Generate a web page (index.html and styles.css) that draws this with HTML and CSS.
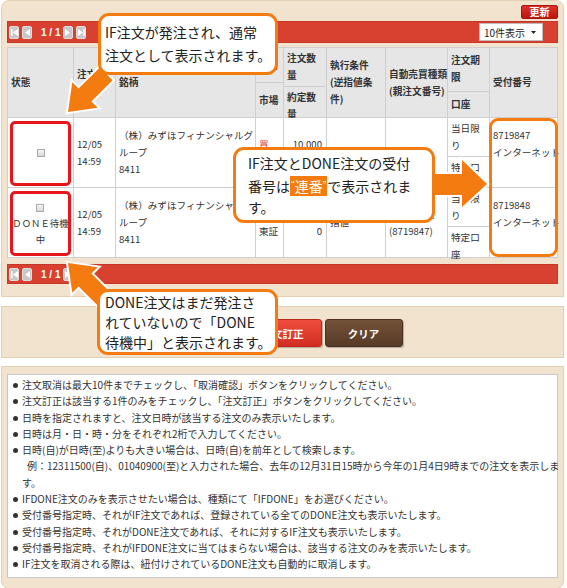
FILE: index.html
```html
<!DOCTYPE html>
<html lang="ja">
<head>
<meta charset="utf-8">
<title>注文一覧</title>
<link rel="stylesheet" href="styles.css">
</head>
<body>
<div class="page">
  <section class="panel panel-top">
    <div class="refresh-row"><span class="btn-refresh">更新</span></div>
    <div class="bar">
      <div class="pager">
        <span class="pg"><svg width="7" height="7" viewBox="0 0 7 7"><rect x="0" y="0" width="1.5" height="7" fill="#fff"/><path d="M7 0 L2 3.5 L7 7Z" fill="#fff"/></svg></span>
        <span class="pg"><svg width="6" height="7" viewBox="0 0 6 7"><path d="M6 0 L1 3.5 L6 7Z" fill="#fff"/></svg></span>
        <span class="pg-num">1 / 1</span>
        <span class="pg"><svg width="6" height="7" viewBox="0 0 6 7"><path d="M0 0 L5 3.5 L0 7Z" fill="#fff"/></svg></span>
        <span class="pg"><svg width="7" height="7" viewBox="0 0 7 7"><path d="M0 0 L5 3.5 L0 7Z" fill="#fff"/><rect x="5.5" y="0" width="1.5" height="7" fill="#fff"/></svg></span>
      </div>
      <div class="select"><span>10件表示</span><svg width="5" height="3" viewBox="0 0 5 3"><path d="M0 0 L5 0 L2.5 3Z" fill="#222"/></svg></div>
    </div>

    <div class="grid">
      <div class="th">状態</div>
      <div class="th">注文<br>日時</div>
      <div class="th">銘柄</div>
      <div class="th split"><div class="sub">取引</div><div class="sub">市場</div></div>
      <div class="th split"><div class="sub">注文数<br>量</div><div class="sub">約定数<br>量</div></div>
      <div class="th">執行条件<br>(逆指値条<br>件)</div>
      <div class="th">自動売買種類<br>(親注文番号)</div>
      <div class="th split"><div class="sub">注文期<br>限</div><div class="sub">口座</div></div>
      <div class="th">受付番号</div>

      <div class="td status"><div><span class="cb"></span></div><span class="frame-red"></span></div>
      <div class="td"><div>12/05<br>14:59</div></div>
      <div class="td"><div>（株）みずほフィナンシャルグ<br>ループ<br>8411</div></div>
      <div class="td"><div><span class="buy">買</span><br>東証</div></div>
      <div class="td num"><div>10,000<br>0</div></div>
      <div class="td"><div>指値</div></div>
      <div class="td"><div>IF注文</div></div>
      <div class="td split"><div class="sub">当日限<br>り</div><div class="sub">特定口<br>座</div></div>
      <div class="td"><div>8719847<br>インターネット<br>&nbsp;</div></div>

      <div class="td status"><div class="done"><span class="cb"></span><br>ＤＯＮＥ待機<br>中</div><span class="frame-red"></span></div>
      <div class="td"><div>12/05<br>14:59</div></div>
      <div class="td"><div>（株）みずほフィナンシャルグ<br>ループ<br>8411</div></div>
      <div class="td"><div><span class="buy">売</span><br>東証</div></div>
      <div class="td num"><div>10,000<br>0</div></div>
      <div class="td"><div>指値</div></div>
      <div class="td"><div>DONE注文<br>(8719847)</div></div>
      <div class="td split"><div class="sub">当日限<br>り</div><div class="sub">特定口<br>座</div></div>
      <div class="td"><div>8719848<br>インターネット<br>&nbsp;</div></div>
    </div>

    <div class="bar bar-bottom">
      <div class="pager">
        <span class="pg"><svg width="7" height="7" viewBox="0 0 7 7"><rect x="0" y="0" width="1.5" height="7" fill="#fff"/><path d="M7 0 L2 3.5 L7 7Z" fill="#fff"/></svg></span>
        <span class="pg"><svg width="6" height="7" viewBox="0 0 6 7"><path d="M6 0 L1 3.5 L6 7Z" fill="#fff"/></svg></span>
        <span class="pg-num">1 / 1</span>
        <span class="pg"><svg width="6" height="7" viewBox="0 0 6 7"><path d="M0 0 L5 3.5 L0 7Z" fill="#fff"/></svg></span>
        <span class="pg"><svg width="7" height="7" viewBox="0 0 7 7"><path d="M0 0 L5 3.5 L0 7Z" fill="#fff"/><rect x="5.5" y="0" width="1.5" height="7" fill="#fff"/></svg></span>
      </div>
    </div>
  </section>

  <section class="panel panel-actions">
    <span class="btn btn-red">取消確認</span>
    <span class="btn btn-red">注文訂正</span>
    <span class="btn btn-brown">クリア</span>
  </section>

  <section class="panel panel-notes">
    <ul class="notes">
      <li>注文取消は最大10件までチェックし、「取消確認」ボタンをクリックしてください。</li>
      <li>注文訂正は該当する1件のみをチェックし、「注文訂正」ボタンをクリックしてください。</li>
      <li>日時を指定されますと、注文日時が該当する注文のみ表示いたします。</li>
      <li>日時は月・日・時・分をそれぞれ2桁で入力してください。</li>
      <li>日時(自)が日時(至)よりも大きい場合は、日時(自)を前年として検索します。<br><span class="ex">例：12311500(自)、01040900(至)と入力された場合、去年の12月31日15時から今年の1月4日9時までの注文を表示しま</span><br>す。</li>
      <li>IFDONE注文のみを表示させたい場合は、種類にて「IFDONE」をお選びください。</li>
      <li>受付番号指定時、それがIF注文であれば、登録されている全てのDONE注文も表示いたします。</li>
      <li>受付番号指定時、それがDONE注文であれば、それに対するIF注文も表示いたします。</li>
      <li>受付番号指定時、それがIFDONE注文に当てはまらない場合は、該当する注文のみを表示いたします。</li>
      <li>IF注文を取消される際は、紐付けされているDONE注文も自動的に取消します。</li>
    </ul>
  </section>

  <div class="frame-orange"></div>

  <svg class="arrows" width="567" height="588" viewBox="0 0 567 588">
    <polygon points="99.8,67.4 78.6,88.6 72.3,82.3 68,112 97.7,107.7 91.4,101.4 112.6,80.2" />
    <polygon points="99.8,307.6 78.6,286.4 72.3,292.7 68,263 97.7,267.3 91.4,273.6 112.6,294.8" />
    <polygon points="425,174 462,174 462,160 487,184 462,207 462,195 425,195" />
  </svg>

  <div class="callout callout-top">IF注文が発注され、通常<br>注文として表示されます。</div>
  <div class="callout callout-mid">IF注文とDONE注文の受付<br>番号は<span class="hl"><span class="q">“</span>連番<span class="q">”</span></span>で表示されま<br>す。</div>
  <div class="callout callout-bottom">DONE注文はまだ発注さ<br>れていないので「DONE<br>待機中」と表示されます。</div>
</div>
</body>
</html>
```

FILE: styles.css
```css
* { box-sizing: border-box; }
html, body { margin: 0; padding: 0; background: #fff; }
body {
  width: 567px;
  height: 588px;
  overflow: hidden;
  font-family: "Noto Sans CJK JP", "Noto Sans", sans-serif;
  color: #333;
}
.page { position: relative; width: 567px; height: 588px; }

.panel {
  background: #f2e3cf;
  border: 1px solid #e3cfb3;
  margin: 0 3px 0 1px;
}
.panel-top {
  border-radius: 8px 8px 0 0;
  padding: 4px 5px 12px;
}
.refresh-row { display: flex; justify-content: flex-end; height: 15px; }
.btn-refresh {
  width: 37px;
  height: 14px;
  background: linear-gradient(#e0302a, #b9160f);
  border: 1px solid #a9140e;
  border-radius: 2px;
  color: #fff;
  font-size: 10px;
  font-weight: bold;
  line-height: 12px;
  text-align: center;
}

.bar {
  height: 22px;
  margin-top: 1px;
  background: #d8412f;
  border: 1px solid #c6372a;
  display: flex;
  align-items: center;
  justify-content: space-between;
  padding: 0 14px 0 1px;
}
.bar-bottom { height: 20px; margin-top: 6px; }
.pager { display: flex; align-items: center; }
.pg {
  width: 10px;
  height: 13px;
  background: #c8c8c8;
  border: 1px solid #dedede;
  border-radius: 2px;
  display: flex;
  align-items: center;
  justify-content: center;
  margin-right: 3px;
}
.pg-num {
  color: #fff;
  font-family: "Liberation Sans", sans-serif;
  font-weight: bold;
  font-size: 10px;
  margin: 0 3px 0 6px;
}
.select {
  width: 64px;
  height: 18px;
  background: #fff;
  border: 1px solid #bdbdbd;
  font-size: 10px;
  color: #222;
  display: flex;
  align-items: center;
  justify-content: space-between;
  padding: 0 6px 0 4px;
}

.grid {
  margin-top: 4px;
  display: grid;
  grid-template-columns: 65px 41px 139px 27px 42px 58px 61px 41px 67px;
  grid-template-rows: 69px 69px 69px;
  gap: 1px;
  padding: 1px;
  background: #cfcfcf;
}
.th {
  background: #e6e6e6;
  font-weight: bold;
  font-size: 9.7px;
  line-height: 17px;
  padding: 0 3px;
  display: flex;
  align-items: center;
  white-space: nowrap;
  color: #333;
}
.td {
  background: #fff;
  font-size: 9.6px;
  line-height: 17px;
  padding: 0 3px;
  display: flex;
  align-items: center;
  white-space: nowrap;
  position: relative;
  color: #333;
}
.split { flex-direction: column; align-items: stretch; padding: 0; }
.sub {
  flex: 1 1 auto;
  display: flex;
  align-items: center;
  padding: 2px 3px;
}
.sub + .sub { border-top: 1px solid #cfcfcf; }
.num { justify-content: flex-end; text-align: right; padding-right: 4px; }
.buy { color: #e23b3b; }

.status { justify-content: center; text-align: center; }
.done { font-size: 9.4px; line-height: 16px; }
.cb {
  display: inline-block;
  width: 8px;
  height: 8px;
  border: 1px solid #a9a9a9;
  background: linear-gradient(#f6f6f6, #d9d9d9);
  vertical-align: middle;
}
.frame-red {
  position: absolute;
  top: 3px;
  left: 2px;
  right: 2px;
  bottom: 1px;
  border: 3px solid #e8161c;
  border-radius: 5px;
}

.panel-actions {
  margin-top: 9px;
  height: 52px;
  display: flex;
  justify-content: center;
  align-items: center;
  gap: 3px;
  padding-top: 2px;
}
.btn {
  width: 78px;
  height: 28px;
  border-radius: 3px;
  color: #fff;
  font-weight: bold;
  font-size: 10.5px;
  display: flex;
  align-items: center;
  justify-content: center;
  box-shadow: 1px 1px 1px rgba(0,0,0,0.25);
}
.btn-red { background: linear-gradient(#ee4d3e, #d22d21); border: 1px solid #bb271c; }
.btn-brown { background: linear-gradient(#745239, #573a27); border: 1px solid #4a301f; }

.panel-notes {
  margin-top: 8px;
  border-radius: 0 0 8px 8px;
  padding: 7px 5px 10px;
}
.notes {
  list-style: none;
  margin: 0;
  padding: 2px 0 4px;
  background: #fff;
  border: 1px solid #c9c9c9;
  font-size: 10px;
  line-height: 16.3px;
  color: #333;
}
.notes li { position: relative; padding-left: 14px; white-space: nowrap; }
.notes li::before {
  content: "";
  position: absolute;
  left: 5px;
  top: 6px;
  width: 5px;
  height: 5px;
  border-radius: 50%;
  background: #333;
}
.ex { padding-left: 5px; }

.frame-orange {
  position: absolute;
  left: 489px;
  top: 118px;
  width: 69px;
  height: 139px;
  border: 3px solid #f47b10;
  border-radius: 9px;
}
.arrows { position: absolute; left: 0; top: 0; z-index: 2; }
.arrows polygon {
  fill: #f47b10;
  stroke: #fff;
  stroke-width: 4;
  paint-order: stroke;
  stroke-linejoin: miter;
}
.callout {
  position: absolute;
  z-index: 3;
  background: #fff;
  border: 3px solid #f47b10;
  border-radius: 11px;
  font-size: 14px;
  color: #222;
  white-space: nowrap;
}
.callout-top { left: 98px; top: 13px; width: 180px; height: 62px; padding: 5px 0 0 4px; line-height: 23px; }
.callout-mid { left: 233px; top: 147px; width: 202px; height: 76px; padding: 3px 0 0 12px; line-height: 21.5px; }
.callout-bottom { left: 97px; top: 289px; width: 181px; height: 66px; padding: 0 0 0 5px; line-height: 20px; }
.hl { background: #f47b10; color: #fff; padding: 0 1px; }
.q { font-family: "Liberation Sans", sans-serif; font-size: 11px; vertical-align: 3px; }
```
